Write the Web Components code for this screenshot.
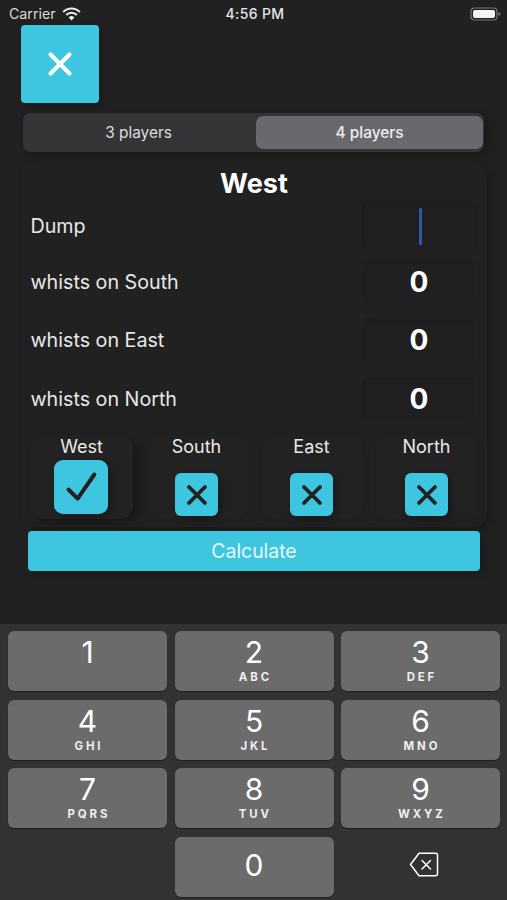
<!DOCTYPE html>
<html>
<head>
<meta charset="utf-8">
<style>
  html, body { margin: 0; padding: 0; background: #212121; }
  body { width: 507px; height: 900px; overflow: hidden; font-family: Inter, "Liberation Sans", sans-serif; color: #fff; }
</style>
</head>
<body>
<whist-app></whist-app>

<script>
const CROSS = '<path d="M6 6 L18 18 M18 6 L6 18"/>';
const CHECK = '<path d="M4.5 13.5 L10 19 L20 4.5"/>';

class StatusBar extends HTMLElement {
  constructor() {
    super();
    this.attachShadow({ mode: 'open' });
    this.shadowRoot.innerHTML = `
      <style>
        :host { display: grid; grid-template-columns: 1fr auto 1fr; align-items: center; height: 25px; padding: 2px 6px 0 9px; box-sizing: border-box; font-size: 14.2px; color: #d8d8d8; }
        .left { display: flex; align-items: center; gap: 6px; }
        .time { font-weight: 500; font-size: 14px; letter-spacing: .35px; color: #e6e6e6; }
        .right { justify-self: end; display: flex; }
        svg { display: block; }
      </style>
      <div class="left">Carrier
        <svg width="19" height="14" viewBox="0 0 19 14"><g fill="none" stroke="#eee" stroke-width="2" stroke-linecap="butt"><path d="M1.2 5 A11.5 11.5 0 0 1 17.8 5"/><path d="M4.2 8 A7.2 7.2 0 0 1 14.8 8"/></g><path d="M6.7 10.4 A4 4 0 0 1 12.3 10.4 L9.5 13.4 Z" fill="#eee"/></svg>
      </div>
      <div class="time">4:56 PM</div>
      <div class="right">
        <svg width="31" height="14" viewBox="0 0 31 14"><rect x="1" y="1" width="26" height="12" rx="3.5" fill="none" stroke="#777" stroke-width="1.2"/><rect x="3" y="3" width="22" height="8" rx="2" fill="#f4f4f4"/><path d="M28.5 5 q2 1 2 2 t-2 2 z" fill="#777"/></svg>
      </div>`;
  }
}

class IconTile extends HTMLElement {
  constructor() {
    super();
    this.attachShadow({ mode: 'open' });
  }
  connectedCallback() {
    const size = this.getAttribute('size') || 43;
    const glyph = this.getAttribute('glyph') || 28;
    const stroke = this.getAttribute('stroke') || '#212121';
    const weight = this.getAttribute('weight') || 2.6;
    this.shadowRoot.innerHTML = `
      <style>
        :host { display: flex; align-items: center; justify-content: center; width: ${size}px; height: ${size}px; background: #3ec6e0; border-radius: var(--tile-radius, 6px); box-shadow: 3px 3px 6px rgba(0,0,0,.3); }
        svg { display: block; }
      </style>
      <svg width="${glyph}" height="${glyph}" viewBox="0 0 24 24" fill="none" stroke="${stroke}" stroke-width="${weight}" stroke-linecap="round" stroke-linejoin="round">${this.getAttribute('icon') === 'check' ? CHECK : CROSS}</svg>`;
  }
}

class SegmentControl extends HTMLElement {
  constructor() {
    super();
    this.attachShadow({ mode: 'open' });
    this.shadowRoot.innerHTML = `
      <style>
        :host { display: grid; grid-template-columns: 231px 227px; height: 39px; margin: 10px 23px 0; padding: 3px 1px 3px 2px; box-sizing: border-box; width: 461px; background: #343437; border-radius: 8px; font-size: 15.4px; color: #ddd; box-shadow: 4px 4px 8px rgba(0,0,0,.25); }
        div { display: flex; align-items: center; justify-content: center; border-radius: 7px; }
        .off { padding-right: 4px; }
        .on { background: #69696d; color: #eee; font-weight: 500; }
      </style>
      <div class="off">3 players</div>
      <div class="on">4 players</div>`;
  }
}

class ScoreRow extends HTMLElement {
  constructor() {
    super();
    this.attachShadow({ mode: 'open' });
    const value = this.getAttribute('value');
    const h = this.getAttribute('h') || 44;
    const top = this.getAttribute('top') || 0;
    this.shadowRoot.innerHTML = `
      <style>
        :host { display: flex; align-items: center; justify-content: space-between; height: ${h}px; margin-top: ${top}px; padding: 0 9px 0 9.5px; font-size: 19.7px; color: #e8e8e8; }
        .box { height: 100%; display: flex; align-items: center; justify-content: center; background: #202020; border-radius: 5px; box-shadow: inset 2px 2px 4px rgba(0,0,0,.1), 1px 1px 2px rgba(255,255,255,.012); font-size: 28px; font-weight: 700; color: #fff; }
        .entry { width: 116px; }
        .fixed { width: 112px; margin-right: 3px; }
        .caret { width: 3px; height: 37px; background: #3355a8; border-radius: 1px; }
      </style>
      <span><slot></slot></span>
      ${value === null
        ? '<div class="box entry"><div class="caret"></div></div>'
        : `<div class="box fixed">${value}</div>`}`;
  }
}

class PlayerPick extends HTMLElement {
  constructor() {
    super();
    this.attachShadow({ mode: 'open' });
    const on = this.hasAttribute('selected');
    this.shadowRoot.innerHTML = `
      <style>
        :host { display: flex; flex-direction: column; align-items: center; height: 84px; width: 102px; justify-self: center; box-sizing: border-box; font-size: 18px; color: #eaeaea; background: #222222; border-radius: 12px; box-shadow: ${on ? '5px 5px 9px rgba(0,0,0,.3), -2px -2px 5px rgba(255,255,255,.012)' : '3px 3px 6px rgba(0,0,0,.06), -2px -2px 4px rgba(255,255,255,.008)'}; }
        .label { height: 23px; line-height: 23px; }
        icon-tile { margin-top: ${on ? 2 : 15}px; margin-right: ${on ? 2 : 0}px; --tile-radius: ${on ? 9 : 6}px; }
      </style>
      <div class="label"><slot></slot></div>
      ${on
        ? '<icon-tile size="54" glyph="40" icon="check" weight="2.4"></icon-tile>'
        : '<icon-tile size="43" glyph="32" weight="2.9"></icon-tile>'}`;
  }
}

class ScoreCard extends HTMLElement {
  constructor() {
    super();
    this.attachShadow({ mode: 'open' });
    this.shadowRoot.innerHTML = `
      <style>
        :host { display: block; width: 466px; height: 364px; margin: 11px 0 0 21px; box-sizing: border-box; background: #212121; border-radius: 14px; box-shadow: 4px 4px 9px rgba(0,0,0,.2), -2px -2px 4px rgba(255,255,255,.008); }
        h2 { margin: 0; height: 40px; line-height: 42px; text-align: center; font-size: 27px; font-weight: 700; color: #fff; }
        .players { display: grid; grid-template-columns: repeat(4, 115px); margin: 14px 0 0 3px; }
      </style>
      <h2>West</h2>
      <slot name="rows"></slot>
      <div class="players"><slot name="players"></slot></div>`;
  }
}

class NumKey extends HTMLElement {
  constructor() {
    super();
    this.attachShadow({ mode: 'open' });
    const pad = this.getAttribute('pad') || 2;
    this.shadowRoot.innerHTML = `
      <style>
        :host { display: flex; flex-direction: column; align-items: center; height: 100%; box-sizing: border-box; padding-top: ${pad}px; background: #6b6b6b; border-radius: 6px; box-shadow: 0 1px 1px rgba(0,0,0,.4); color: #fff; }
        .n { font-size: 30px; line-height: 38px; height: 38px; }
        .l { font-size: 11.4px; font-weight: 700; line-height: 13px; letter-spacing: 2.9px; margin-right: -2.9px; color: #eee; }
      </style>
      <div class="n">${this.getAttribute('n')}</div>
      <div class="l">${this.getAttribute('l') || ''}</div>`;
  }
}

class NumPad extends HTMLElement {
  constructor() {
    super();
    this.attachShadow({ mode: 'open' });
    const keys = [['1',''],['2','ABC'],['3','DEF'],['4','GHI'],['5','JKL'],['6','MNO'],['7','PQRS'],['8','TUV'],['9','WXYZ']];
    this.shadowRoot.innerHTML = `
      <style>
        :host { display: grid; grid-template-columns: 159px 159px 159px; grid-auto-rows: 60px; column-gap: 7.5px; row-gap: 8.5px; height: 276px; box-sizing: border-box; padding: 7px 8px 0; background: #323232; }
        .del { display: flex; align-items: center; justify-content: center; padding: 0 0 3px 6px; }
        svg { display: block; }
      </style>
      ${keys.map(k => `<num-key n="${k[0]}" l="${k[1]}"></num-key>`).join('')}
      <div></div>
      <num-key n="0" pad="9"></num-key>
      <div class="del">
        <svg width="30" height="26" viewBox="0 0 30 26" fill="none" stroke="#fff" stroke-width="1.5" stroke-linejoin="round" stroke-linecap="round"><path d="M10 1.8 H26.5 a2 2 0 0 1 2 2 V22.2 a2 2 0 0 1 -2 2 H10 L1.5 13 Z" transform="translate(0 -.5)"/><path d="M13 8.5 L21.5 17 M21.5 8.5 L13 17"/></svg>
      </div>`;
  }
}

class CalcButton extends HTMLElement {
  constructor() {
    super();
    this.attachShadow({ mode: 'open' });
    this.shadowRoot.innerHTML = `
      <style>
        :host { display: flex; align-items: center; justify-content: center; width: 452px; height: 40px; margin: 4px 0 0 28px; background: #3ec6e0; border-radius: 4px; font-size: 19.4px; color: #e6f8fc; box-shadow: 4px 4px 8px rgba(0,0,0,.2); }
      </style>
      <slot></slot>`;
  }
}

class WhistApp extends HTMLElement {
  constructor() {
    super();
    this.attachShadow({ mode: 'open' });
    this.shadowRoot.innerHTML = `
      <style>
        :host { display: block; }
        .main { height: 624px; }
        .close { margin-left: 20.5px; --tile-radius: 4px; }
      </style>
      <div class="main">
        <status-bar></status-bar>
        <icon-tile class="close" size="78" glyph="38" stroke="#fff" weight="2.6"></icon-tile>
        <segment-control></segment-control>
        <score-card>
          <score-row slot="rows" h="46">Dump</score-row>
          <score-row slot="rows" top="11" value="0">whists on South</score-row>
          <score-row slot="rows" top="14" value="0">whists on East</score-row>
          <score-row slot="rows" top="15" value="0">whists on North</score-row>
          <player-pick slot="players" selected>West</player-pick>
          <player-pick slot="players">South</player-pick>
          <player-pick slot="players">East</player-pick>
          <player-pick slot="players">North</player-pick>
        </score-card>
        <calc-button>Calculate</calc-button>
      </div>
      <num-pad></num-pad>`;
  }
}

customElements.define('status-bar', StatusBar);
customElements.define('icon-tile', IconTile);
customElements.define('segment-control', SegmentControl);
customElements.define('score-row', ScoreRow);
customElements.define('player-pick', PlayerPick);
customElements.define('score-card', ScoreCard);
customElements.define('num-key', NumKey);
customElements.define('num-pad', NumPad);
customElements.define('calc-button', CalcButton);
customElements.define('whist-app', WhistApp);
</script>
</body>
</html>
